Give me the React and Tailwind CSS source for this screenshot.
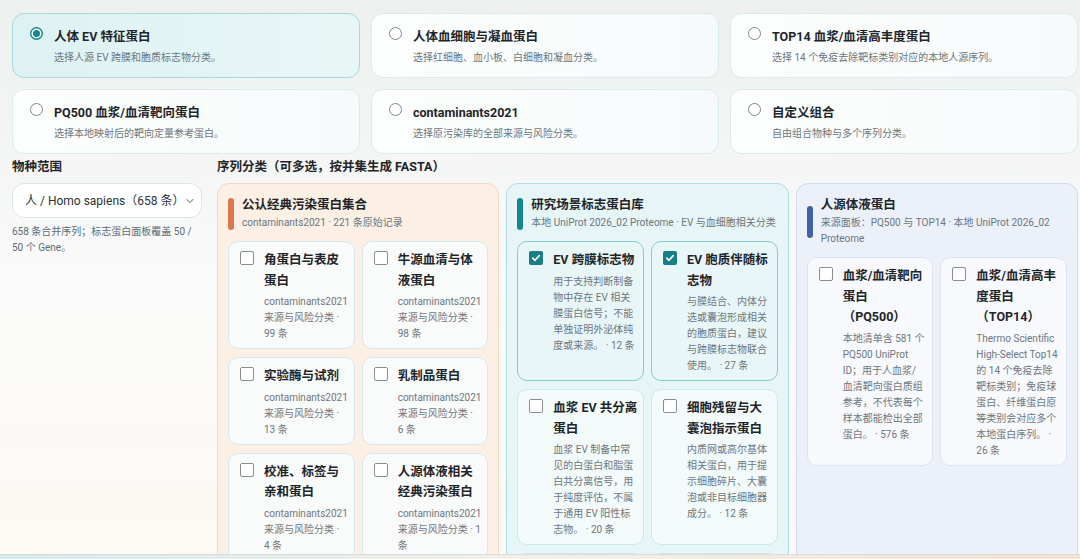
import React from "react";
import { ChevronDown } from "lucide-react";

const topOptions = [
  { t: "人体 EV 特征蛋白", d: "选择人源 EV 跨膜和胞质标志物分类。", sel: true },
  { t: "人体血细胞与凝血蛋白", d: "选择红细胞、血小板、白细胞和凝血分类。" },
  { t: "TOP14 血浆/血清高丰度蛋白", d: "选择 14 个免疫去除靶标类别对应的本地人源序列。" },
  { t: "PQ500 血浆/血清靶向蛋白", d: "选择本地映射后的靶向定量参考蛋白。" },
  { t: "contaminants2021", d: "选择原污染库的全部来源与风险分类。" },
  { t: "自定义组合", d: "自由组合物种与多个序列分类。" },
];

const panels = [
  {
    tone: "orange",
    title: "公认经典污染蛋白集合",
    sub: "contaminants2021 · 221 条原始记录",
    items: [
      { t: "角蛋白与表皮蛋白", d: "contaminants2021 来源与风险分类 · 99 条" },
      { t: "牛源血清与体液蛋白", d: "contaminants2021 来源与风险分类 · 98 条" },
      { t: "实验酶与试剂", d: "contaminants2021 来源与风险分类 · 13 条" },
      { t: "乳制品蛋白", d: "contaminants2021 来源与风险分类 · 6 条" },
      { t: "校准、标签与亲和蛋白", d: "contaminants2021 来源与风险分类 · 4 条" },
      { t: "人源体液相关经典污染蛋白", d: "contaminants2021 来源与风险分类 · 1 条", tight: true },
    ],
  },
  {
    tone: "teal",
    title: "研究场景标志蛋白库",
    sub: "本地 UniProt 2026_02 Proteome · EV 与血细胞相关分类",
    items: [
      { t: "EV 跨膜标志物", d: "用于支持判断制备物中存在 EV 相关膜蛋白信号；不能单独证明外泌体纯度或来源。 · 12 条", c: true },
      { t: "EV 胞质伴随标志物", d: "与膜结合、内体分选或囊泡形成相关的胞质蛋白，建议与跨膜标志物联合使用。 · 27 条", c: true },
      { t: "血浆 EV 共分离蛋白", d: "血浆 EV 制备中常见的白蛋白和脂蛋白共分离信号，用于纯度评估，不属于通用 EV 阳性标志物。 · 20 条" },
      { t: "细胞残留与大囊泡指示蛋白", d: "内质网或高尔基体相关蛋白，用于提示细胞碎片、大囊泡或非目标细胞器成分。 · 12 条" },
      { t: "红细胞膜与血红蛋白", d: "红细胞相关蛋白，用于提示溶血或红细胞残留。 · 18 条" },
      { t: "血小板活化相关蛋白", d: "血小板来源蛋白，用于提示血小板污染。 · 15 条" },
    ],
  },
  {
    tone: "blue",
    title: "人源体液蛋白",
    sub: "来源面板：PQ500 与 TOP14 · 本地 UniProt 2026_02 Proteome",
    items: [
      { t: "血浆/血清靶向蛋白（PQ500）", d: "本地清单含 581 个 PQ500 UniProt ID；用于人血浆/血清靶向蛋白质组参考，不代表每个样本都能检出全部蛋白。 · 576 条" },
      { t: "血浆/血清高丰度蛋白（TOP14）", d: "Thermo Scientific High-Select Top14 的 14 个免疫去除靶标类别；免疫球蛋白、纤维蛋白原等类别会对应多个本地蛋白序列。 · 26 条" },
    ],
  },
];

const toneCls = {
  orange: {
    panel: "border-[#f2d8c3] bg-[#fcefe3]",
    bar: "bg-[#d97a4e]",
    card: "border-[#d6eaed] bg-[#f9fafa]",
  },
  teal: {
    panel: "border-[#b0dde3] bg-[#e6f5f6]",
    bar: "bg-[#14878f]",
    card: "border-[#cde9ec] bg-[#f2fafa]",
    cardOn: "border-[#88cad1] bg-[#e9f6f7]",
  },
  blue: {
    panel: "border-[#d3dcee] bg-[#ecf0f9]",
    bar: "bg-[#3f63a6]",
    card: "border-[#dde5f1] bg-[#f7f9fc]",
  },
};

function Radio({ checked }) {
  return (
    <svg width="13" height="13" viewBox="0 0 13 13" className="shrink-0 mt-[-1px]">
      {checked ? (
        <>
          <circle cx="6.5" cy="6.5" r="5.8" fill="#fff" stroke="#14878e" strokeWidth="1.4" />
          <circle cx="6.5" cy="6.5" r="3.5" fill="#14878e" />
        </>
      ) : (
        <circle cx="6.5" cy="6.5" r="6" fill="#fff" stroke="#7e858a" strokeWidth="1" />
      )}
    </svg>
  );
}

function Check({ checked }) {
  if (checked) {
    return (
      <div className="mt-[1px] flex h-[14px] w-[14px] shrink-0 items-center justify-center rounded-[2px] bg-[#177e85]">
        <svg width="10" height="10" viewBox="0 0 10 10">
          <path d="M1.8 5.2 L4 7.3 L8.3 2.6" stroke="#fff" strokeWidth="1.7" fill="none" strokeLinecap="round" strokeLinejoin="round" />
        </svg>
      </div>
    );
  }
  return <div className="mt-[1px] h-[14px] w-[14px] shrink-0 rounded-[2px] border border-[#868c91] bg-white" />;
}

function Item({ item, tone }) {
  const cls = item.c ? toneCls[tone].cardOn : toneCls[tone].card;
  return (
    <div className={`flex gap-[10px] rounded-[10px] border pl-[11px] pr-[5px] pt-[8px] pb-[6px] ${cls}`}>
      <Check checked={item.c} />
      <div className="min-w-0 flex-1">
        <div className="text-[12.5px] leading-[20.5px] font-bold text-[#1e2529]">{item.t}</div>
        <div className={`mt-[3px] text-[10px] leading-[16px] text-[#6d777e] ${item.tight ? "pr-[1px]" : "pr-[2.5px]"}`}>{item.d}</div>
      </div>
    </div>
  );
}

function Panel({ p }) {
  const tc = toneCls[p.tone];
  return (
    <div className={`rounded-[12px] border px-[10px] pt-[12px] pb-[10px] ${tc.panel}`}>
      <div className="flex items-center gap-[8px]">
        <div className={`h-[32px] w-[6px] shrink-0 rounded-full ${tc.bar}`} />
        <div className="min-w-0">
          <div className="text-[12.5px] leading-[17px] font-bold text-[#1e2529]">{p.title}</div>
          <div className="mt-[2px] text-[10px] leading-[16px] text-[#6b767d]">{p.sub}</div>
        </div>
      </div>
      <div className="mt-[10px] grid grid-cols-2 gap-x-[7px] gap-y-[8px]">
        {p.items.map((it, i) => (
          <Item key={i} item={it} tone={p.tone} />
        ))}
      </div>
    </div>
  );
}

export default function App() {
  return (
    <div className="flex h-[559px] w-[1080px] flex-col overflow-hidden bg-linear-to-b from-[#eef0f0] via-[#f9faf9] to-[#fdf9f4] font-[Roboto,'Noto_Sans_CJK_SC',sans-serif] text-[#1e2529] [text-spacing-trim:space-all]">
      <div className="h-[554px] overflow-hidden pl-[12px] pr-[2px] pt-[13px]">
        <div className="grid grid-cols-3 gap-x-[11px] gap-y-[11px]">
          {topOptions.map((o, i) => (
            <div
              key={i}
              className={
                o.sel
                  ? "flex gap-[11px] rounded-[12px] border border-[#a6d8de] bg-linear-to-r from-[#def2f3] to-[#e8f6f6] pl-[17px] pr-[10px] pt-[14px] pb-[12px]"
                  : "flex gap-[11px] rounded-[12px] border border-[#d9ecef] bg-linear-to-r from-[#fdfefe] to-[#f6fafa] pl-[17px] pr-[10px] pt-[14px] pb-[12px]"
              }
            >
              <Radio checked={o.sel} />
              <div>
                <div className="text-[12.5px] leading-[18px] font-bold text-[#1e2529]">{o.t}</div>
                <div className="mt-[5px] text-[10px] leading-[14px] text-[#6b767d]">{o.d}</div>
              </div>
            </div>
          ))}
        </div>

        <div className="mt-[4px] grid grid-cols-[190px_1fr] gap-x-[15px]">
          <div className="flex flex-col">
            <div className="text-[12.5px] leading-[17px] font-bold">物种范围</div>
            <div className="mt-[8px] flex h-[35px] items-center justify-between rounded-[12px] border border-[#dce5ea] bg-white pl-[12px] pr-[9px]">
              <span className="whitespace-nowrap text-[12px] text-[#2c3236]">人 / Homo sapiens（658 条）</span>
              <ChevronDown size={12} strokeWidth={2} className="shrink-0 text-[#4a5055]" />
            </div>
            <div className="mt-[6px] text-[10px] leading-[16px] text-[#5f6c74]">
              658 条合并序列；标志蛋白面板覆盖 50 / 50 个 Gene。
            </div>
          </div>
          <div className="flex min-w-0 flex-col">
            <div className="text-[12.5px] leading-[17px] font-bold">序列分类（可多选，按并集生成 FASTA）</div>
            <div className="mt-[8px] grid grid-cols-3 gap-x-[7px]">
              {panels.map((p, i) => (
                <Panel key={i} p={p} />
              ))}
            </div>
          </div>
        </div>
      </div>
      <div className="h-[5px] shrink-0 border-t border-[#d9dcdc] bg-linear-to-r from-[#d3ebee] via-[#f6efe7] to-[#f5e2d3]" />
    </div>
  );
}
